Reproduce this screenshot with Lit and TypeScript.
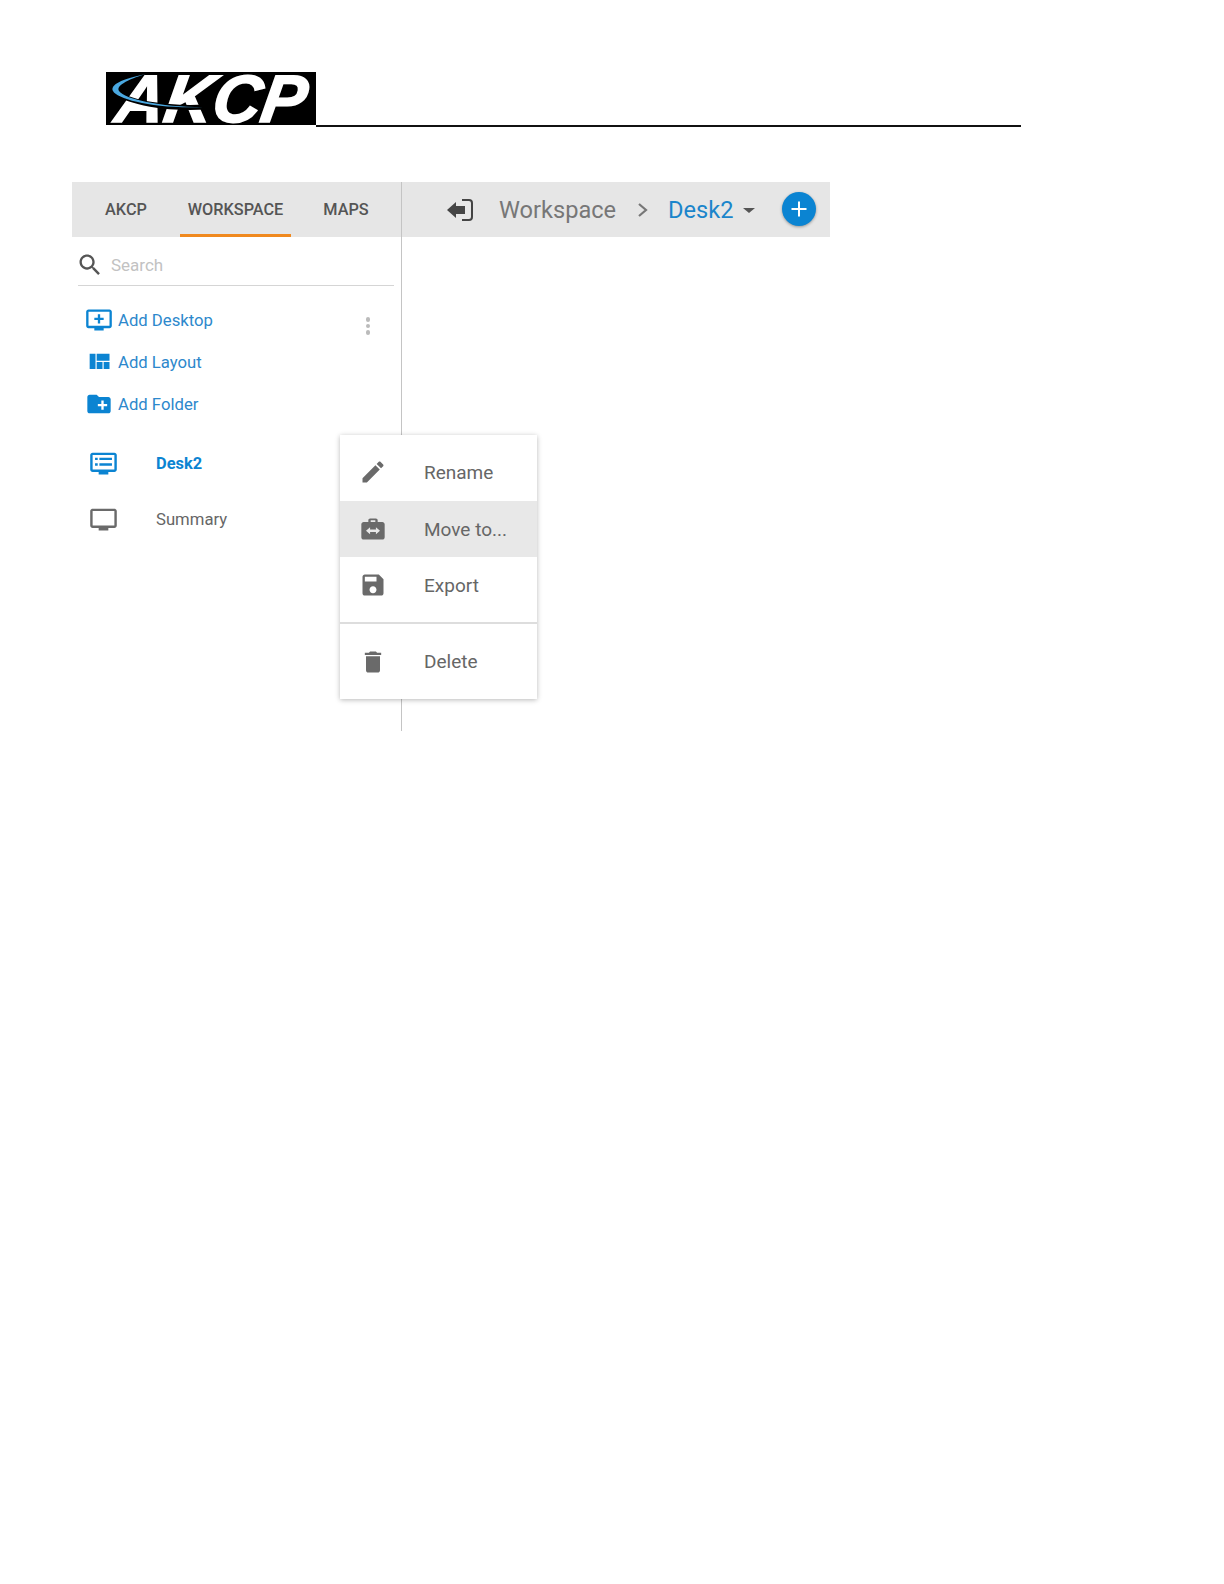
import { LitElement, html, css, svg } from "lit";
import { customElement } from "lit/decorators.js";

const P = {
  search: "M15.5 14h-.79l-.28-.27C15.41 12.59 16 11.11 16 9.5 16 5.91 13.09 3 9.5 3S3 5.91 3 9.5 5.91 16 9.5 16c1.61 0 3.09-.59 4.23-1.57l.27.28v.79l5 4.99L20.49 19l-4.99-5zm-6 0C7.01 14 5 11.99 5 9.5S7.01 5 9.5 5 14 7.01 14 9.5 11.99 14 9.5 14z",
  addDesk: "M21 3H3c-1.11 0-2 .89-2 2v12c0 1.1.89 2 2 2h5v2h8v-2h5c1.1 0 1.99-.9 1.99-2L23 5c0-1.11-.9-2-2-2zm0 14H3V5h18v12zm-5-7v2h-3v3h-2v-3H8v-2h3V7h2v3h3z",
  quilt: "M10 18h5v-6h-5v6zm-6 0h5V5H4v13zm12 0h5v-6h-5v6zM10 5v6h11V5H10z",
  folder: "M20 6h-8l-2-2H4c-1.11 0-1.99.89-1.99 2L2 18c0 1.11.89 2 2 2h16c1.11 0 2-.89 2-2V8c0-1.11-.89-2-2-2zm-1 8h-3v3h-2v-3h-3v-2h3V9h2v3h3v2z",
  tv: "M21 3H3c-1.1 0-2 .9-2 2v12c0 1.1.9 2 2 2h5v2h8v-2h5c1.1 0 2-.9 2-2V5c0-1.1-.9-2-2-2zm0 14H3V5h18v12z",
  list: "M5 7.2h2.2v2H5zM5 11.8h2.2v2H5zM8.6 7.2H19v2H8.6zM8.6 11.8H19v2H8.6z",
  edit: "M3 17.25V21h3.75L17.81 9.94l-3.75-3.75L3 17.25zM20.71 7.04c.39-.39.39-1.02 0-1.41l-2.34-2.34c-.39-.39-1.02-.39-1.41 0l-1.83 1.83 3.75 3.75 1.83-1.83z",
  move: "M4 6h4V4.5C8 3.7 8.7 3 9.5 3h5c.8 0 1.5.7 1.5 1.5V6h4c1.1 0 2 .9 2 2v11c0 1.1-.9 2-2 2H4c-1.1 0-2-.9-2-2V8c0-1.1.9-2 2-2zM10 4.6h4V6h-4zM6 13.5l3.5-3v2h5v-2l3.5 3-3.5 3v-2h-5v2z",
  save: "M17 3H5c-1.11 0-2 .9-2 2v14c0 1.1.89 2 2 2h14c1.1 0 2-.9 2-2V7l-4-4zm-5 16c-1.66 0-3-1.34-3-3s1.34-3 3-3 3 1.34 3 3-1.34 3-3 3zm3-10H5V5h10v4z",
  del: "M6 19c0 1.1.9 2 2 2h8c1.1 0 2-.9 2-2V7H6v12zM19 4h-3.5l-1-1h-5l-1 1H5v2h14V4z",
};

const icon = (d: string) =>
  html`<svg viewBox="0 0 24 24"><path fill-rule="evenodd" d=${d}></path></svg>`;

@customElement("app-root")
export class AppRoot extends LitElement {
  static styles = css`
    :host { display: block; width: 1224px; height: 1584px; background: #fff; font-family: Roboto, "Liberation Sans", sans-serif; color: #666; overflow: hidden; }
    .page { padding-top: 72px; }
    .head { display: flex; align-items: flex-start; margin-left: 106px; width: 915px; height: 53px; }
    .logo { position: relative; width: 210px; height: 53px; background: #000; flex: none; display: flex; align-items: center; justify-content: center; }
    .logo span { font: italic 700 67px/53px "Liberation Sans", Arial, sans-serif; color: #fff; letter-spacing: 0; -webkit-text-stroke: 1.6px #fff; transform: skewX(-9deg); margin-left: 2px; }
    .swoosh { position: absolute; left: 0; top: 0; width: 210px; height: 53px; }
    .rule { align-self: flex-end; flex: 1; height: 2px; background: #111; margin-bottom: -2px; }
    .panel { position: relative; margin: 57px 0 0 72px; width: 758px; }
    .bar { display: flex; height: 55px; background: #e6e6e6; }
    .tabs { flex: none; display: flex; border-right: 1px solid #c4c4c4; box-sizing: border-box; width: 330px; font-size: 16.3px; font-weight: 500; color: #555; }
    .tab { display: flex; align-items: center; justify-content: center; height: 55px; box-sizing: border-box; }
    .tab.a { width: 108px; }
    .tab.w { width: 111px; border-bottom: 3px solid #f0891e; padding-top: 3px; }
    .tab.m { flex: 1; }
    .crumbs { flex: 1; display: flex; align-items: center; font-size: 23.6px; color: #777; }
    .back { width: 28px; height: 24px; margin-left: 45px; }
    .crumb { margin-left: 24px; }
    .chev { width: 12px; height: 16px; margin-left: 21px; }
    .cur { color: #1b85cb; margin-left: 19px; }
    .caret { width: 0; height: 0; border-left: 6px solid transparent; border-right: 6px solid transparent; border-top: 5px solid #555; margin: 2px 0 0 9px; }
    .fab { width: 34px; height: 34px; border-radius: 50%; background: #0b84d2; margin-left: 27px; display: flex; align-items: center; justify-content: center; box-shadow: 0 1px 3px rgba(0,0,0,.35); margin-top: -1px; }
    .fab svg { width: 20px; height: 20px; }
    .side { width: 330px; height: 494px; box-sizing: border-box; border-right: 1px solid #c4c4c4; padding: 11px 7px 0 6px; }
    .search { display: flex; align-items: center; height: 38px; border-bottom: 1px solid #d5d5d5; font-size: 17px; line-height: 20px; color: #c2c2c2; padding-bottom: 3px; box-sizing: border-box; }
    .search svg { width: 28px; height: 28px; fill: #555; margin-left: -2px; margin-right: 7px; flex: none; }
    .actions { display: flex; justify-content: space-between; margin-top: 13px; }
    .action { display: flex; align-items: center; height: 42px; color: #2d88cc; font-size: 16.7px; }
    .action svg { width: 28px; height: 28px; fill: #0b84d2; margin-left: 7px; margin-right: 5px; flex: none; }
    .kebab { display: flex; flex-direction: column; gap: 2px; margin: 18px 24px 0 0; }
    .kebab i { width: 4.5px; height: 4.5px; border-radius: 50%; background: #bbb; display: block; }
    .items { margin-top: 10px; }
    .item { display: flex; align-items: center; height: 56px; font-size: 16.7px; color: #666; }
    .item svg { width: 29px; height: 29px; fill: #6a6a6a; margin-left: 11px; margin-right: 38px; flex: none; }
    .item.on { color: #0b84d2; font-weight: 700; font-size: 16.4px; }
    .item.on svg { fill: #0b84d2; }
    .menu { position: absolute; left: 268px; top: 253px; width: 197px; height: 264px; background: #fff; box-shadow: 0 1px 5px rgba(0,0,0,.28); font-size: 19px; color: #666; }
    .mi { display: flex; align-items: center; box-sizing: border-box; }
    .mi svg { width: 28px; height: 28px; fill: #6a6a6a; margin-left: 19px; margin-right: 37px; flex: none; }
    .mi.r { height: 66px; padding-top: 8px; }
    .mi.mv { height: 56px; background: #e8e8e8; }
    .mi.x { height: 67px; border-bottom: 2px solid #ddd; padding-bottom: 9px; }
    .mi.d { height: 75px; }
  `;

  render() {
    return html`<div class="page">
      <div class="head">
        <div class="logo">
          <span>AKCP</span>
          <svg class="swoosh" viewBox="0 0 210 53">${svg`<path d="M9 19C22 31 60 37 100 35" fill="none" stroke="#000" stroke-width="5"></path><path d="M40 2C15 7 4 13 7 19c4 8 40 18 90 16-44 0-78-8-84-16C10 14 20 8 40 2z" fill="#4aa8e0"></path>`}</svg>
        </div>
        <div class="rule"></div>
      </div>
      <div class="panel">
        <div class="bar">
          <div class="tabs">
            <div class="tab a">AKCP</div>
            <div class="tab w">WORKSPACE</div>
            <div class="tab m">MAPS</div>
          </div>
          <div class="crumbs">
            <svg class="back" viewBox="0 0 28 24">${svg`<path d="M0 12 9 4v4h9v8H9v4z" fill="#444"></path><path d="M15 2h7a3 3 0 0 1 3 3v14a3 3 0 0 1-3 3h-7" fill="none" stroke="#444" stroke-width="2"></path>`}</svg>
            <span class="crumb">Workspace</span>
            <svg class="chev" viewBox="0 0 12 16">${svg`<path d="M2 2l7 6-7 6" fill="none" stroke="#777" stroke-width="2.2"></path>`}</svg>
            <span class="cur">Desk2</span>
            <i class="caret"></i>
            <div class="fab"><svg viewBox="0 0 20 20">${svg`<path d="M10 2.5v15M2.5 10h15" stroke="#fff" stroke-width="2"></path>`}</svg></div>
          </div>
        </div>
        <div class="side">
          <div class="search">${icon(P.search)}Search</div>
          <div class="actions">
            <div>
              <div class="action">${icon(P.addDesk)}Add Desktop</div>
              <div class="action">${icon(P.quilt)}Add Layout</div>
              <div class="action">${icon(P.folder)}Add Folder</div>
            </div>
            <div class="kebab"><i></i><i></i><i></i></div>
          </div>
          <div class="items">
            <div class="item on"><svg viewBox="0 0 24 24"><path d=${P.tv}></path><path d=${P.list}></path></svg>Desk2</div>
            <div class="item">${icon(P.tv)}Summary</div>
          </div>
        </div>
        <div class="menu">
          <div class="mi r">${icon(P.edit)}Rename</div>
          <div class="mi mv">${icon(P.move)}Move to...</div>
          <div class="mi x">${icon(P.save)}Export</div>
          <div class="mi d">${icon(P.del)}Delete</div>
        </div>
      </div>
    </div>`;
  }
}
